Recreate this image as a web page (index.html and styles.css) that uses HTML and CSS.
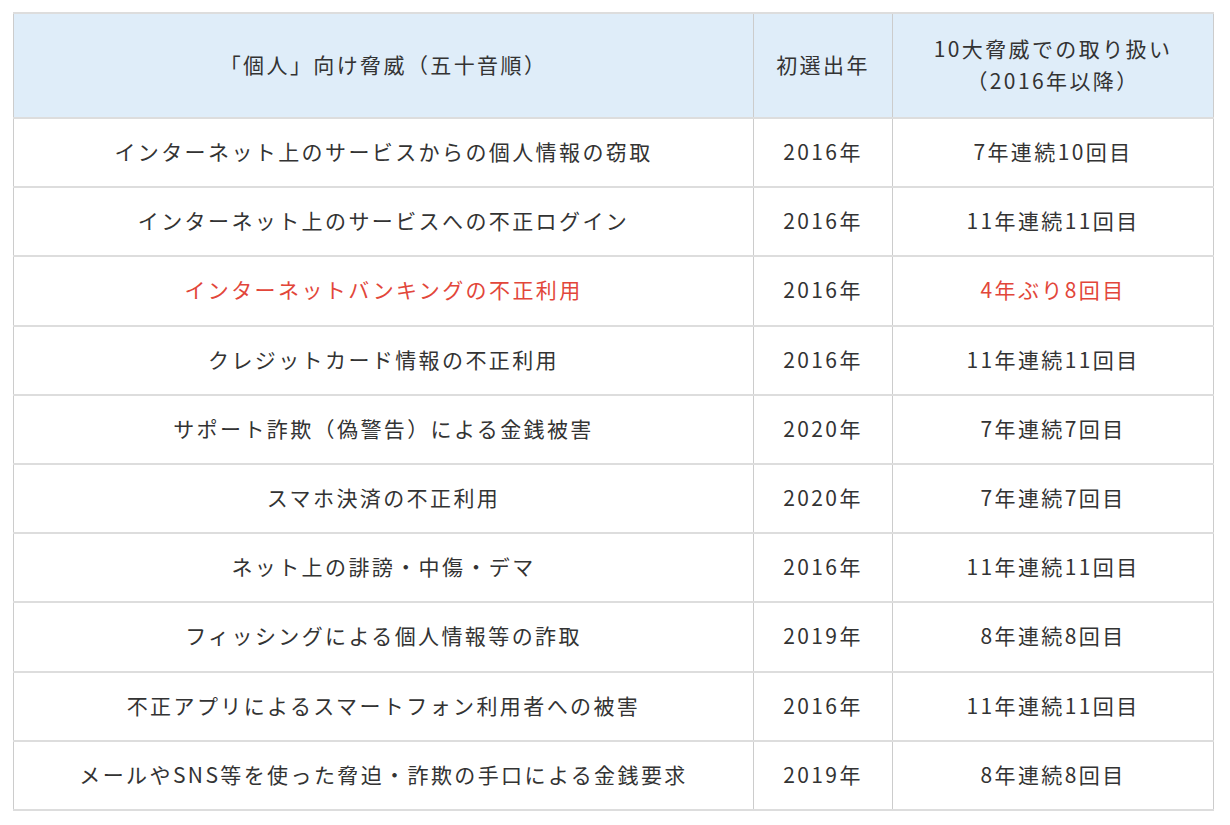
FILE: index.html
```html
<!DOCTYPE html>
<html lang="ja">
<head>
<meta charset="utf-8">
<title>個人向け脅威</title>
<link rel="stylesheet" href="styles.css">
</head>
<body>
<div class="wrap">
<table class="threats">
  <colgroup>
    <col class="c1"><col class="c2"><col class="c3">
  </colgroup>
  <thead>
    <tr>
      <th>「個人」向け脅威（五十音順）</th>
      <th>初選出年</th>
      <th>10大脅威での取り扱い<br>（2016年以降）</th>
    </tr>
  </thead>
  <tbody>
    <tr><td>インターネット上のサービスからの個人情報の窃取</td><td>2016年</td><td>7年連続10回目</td></tr>
    <tr><td>インターネット上のサービスへの不正ログイン</td><td>2016年</td><td>11年連続11回目</td></tr>
    <tr class="hl"><td>インターネットバンキングの不正利用</td><td class="plain">2016年</td><td>4年ぶり8回目</td></tr>
    <tr><td>クレジットカード情報の不正利用</td><td>2016年</td><td>11年連続11回目</td></tr>
    <tr><td>サポート詐欺（偽警告）による金銭被害</td><td>2020年</td><td>7年連続7回目</td></tr>
    <tr><td>スマホ決済の不正利用</td><td>2020年</td><td>7年連続7回目</td></tr>
    <tr><td>ネット上の誹謗・中傷・デマ</td><td>2016年</td><td>11年連続11回目</td></tr>
    <tr><td>フィッシングによる個人情報等の詐取</td><td>2019年</td><td>8年連続8回目</td></tr>
    <tr><td>不正アプリによるスマートフォン利用者への被害</td><td>2016年</td><td>11年連続11回目</td></tr>
    <tr><td>メールやSNS等を使った脅迫・詐欺の手口による金銭要求</td><td>2019年</td><td>8年連続8回目</td></tr>
  </tbody>
</table>
</div>
</body>
</html>
```

FILE: styles.css
```css
html, body {
  margin: 0;
  padding: 0;
  background: #ffffff;
}
.wrap {
  padding: 12px 0 0 13px;
}
.threats {
  width: 1200px;
  border-collapse: collapse;
  table-layout: fixed;
  font-family: "Noto Sans CJK JP", "Noto Sans", sans-serif;
  font-size: 21px;
  letter-spacing: 2.4px;
  color: #333333;
}
.c1 { width: 740px; }
.c2 { width: 139px; }
.c3 { width: 321px; }
.threats th,
.threats td {
  border-left: 1px solid #cccccc;
  border-right: 1px solid #cccccc;
  border-top: 2px solid #dddddd;
  border-bottom: 2px solid #dddddd;
  text-align: center;
  vertical-align: middle;
  padding: 0 0 3px 0;
  font-weight: 400;
}
.threats th {
  background: #dfedf9;
  height: 100px;
  line-height: 32px;
}
.threats td {
  height: 64.2px;
  line-height: 30px;
}
.threats tr.hl td {
  color: #e2463a;
}
.threats tr.hl td.plain {
  color: #333333;
}
```
